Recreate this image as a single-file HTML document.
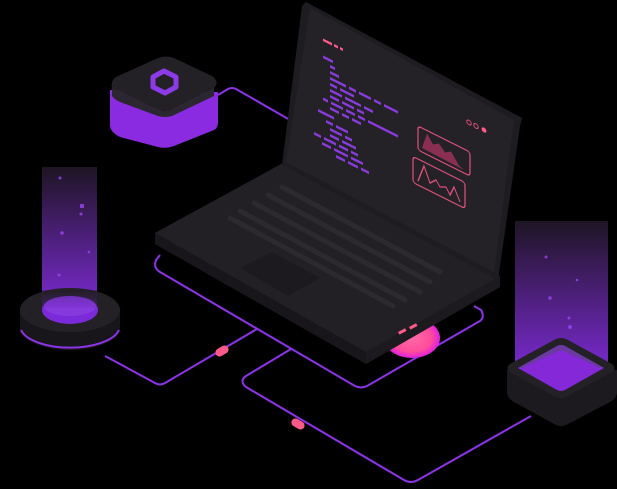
<!DOCTYPE html>
<html><head><style>
html,body{margin:0;padding:0;background:#000;width:617px;height:489px;overflow:hidden}
svg{display:block}
</style></head><body>
<svg width="617" height="489" viewBox="0 0 617 489" xmlns="http://www.w3.org/2000/svg">
<defs>
<linearGradient id="beam" x1="0" y1="0" x2="0" y2="1">
<stop offset="0" stop-color="#1e1524"/>
<stop offset="1" stop-color="#7a2ad0"/>
</linearGradient>
<radialGradient id="glow" cx="0.5" cy="0.5" r="0.5">
<stop offset="0" stop-color="#ff6aa8"/>
<stop offset="0.7" stop-color="#ff4c9a"/>
<stop offset="1" stop-color="#e020e0"/>
</radialGradient>
</defs>
<rect width="617" height="489" fill="#000"/>

<!-- wires -->
<g fill="none" stroke="#8d33e8" stroke-width="2" stroke-linejoin="round">
<path d="M218 95 L228 89 Q232 87 236 89 L290 120"/>
<path d="M160 255 L156 260 Q153 268 160 272 L355 386 Q361 389 367 386 L480 321 Q485 317 481 310 L474 306"/>
<path d="M257 329 L165 383 Q160 386 155 383 L105 356"/>
<path d="M291 349 L246 376 Q239 381 246 387 L404 480 Q411 484 418 480 L531 416"/>
</g>
<rect x="215" y="347" width="14" height="8" rx="4" fill="#ff5a8a" transform="rotate(-30 222 351)"/>
<rect x="291" y="420" width="14" height="8" rx="4" fill="#ff5a8a" transform="rotate(30 298 424)"/>

<!-- glow under laptop -->
<ellipse cx="412" cy="338" rx="28" ry="20" fill="url(#glow)"/>

<!-- laptop base -->
<polygon points="155,233 283,163 500,276 500,287 366,364 155,244" fill="#1c1a1e"/>
<polygon points="155,233 283,163 500,276 366,352" fill="#222025"/>
<polygon points="155,233 366,352 366,364 155,244" fill="#18161a"/>
<!-- keyboard -->
<g stroke="#2c292f" stroke-width="5" stroke-linecap="round">
<line x1="282" y1="187" x2="440" y2="272"/>
<line x1="268" y1="195" x2="430" y2="282"/>
<line x1="254" y1="203" x2="420" y2="292"/>
<line x1="240" y1="211" x2="405" y2="300"/>
<line x1="230" y1="218" x2="393" y2="306"/>
</g>
<polygon points="240,268 272,252 320,278 288,296" fill="#1c1a1e"/>
<g fill="#ff5a8a"><rect x="398" y="330" width="8" height="3" transform="rotate(-28 402 331)"/><rect x="409" y="325" width="8" height="3" transform="rotate(-28 413 326)"/></g>

<!-- laptop lid -->
<polygon points="306,2 522,118 520,126 498,280 282,165 302,6" fill="#1e1c20"/>
<polygon points="310,8 514,120 494,272 286,162" fill="#252227"/>

<!-- screen content in skewed space -->
<g transform="matrix(1,0.5,0,1,0,0)">
<g fill="#ff5a8a"><rect x="323" y="-123" width="9" height="2.5"/><rect x="334" y="-123" width="4" height="2.5"/><rect x="340" y="-123" width="3" height="2.5"/></g>
<g fill="#8a3be0">
<rect x="323" y="-106" width="10" height="2.6"/>
<rect x="330" y="-100" width="5" height="2.6"/>
<rect x="330" y="-94" width="9" height="2.6"/>
<rect x="330" y="-88" width="16" height="2.6"/><rect x="349" y="-88" width="7" height="2.6"/><rect x="359" y="-88" width="12" height="2.6"/><rect x="374" y="-88" width="7" height="2.6"/><rect x="384" y="-88" width="14" height="2.6"/>
<rect x="330" y="-82" width="7" height="2.6"/><rect x="340" y="-82" width="14" height="2.6"/>
<rect x="330" y="-76" width="12" height="2.6"/><rect x="345" y="-76" width="16" height="2.6"/><rect x="364" y="-76" width="9" height="2.6"/>
<rect x="330" y="-70" width="9" height="2.6"/><rect x="342" y="-70" width="12" height="2.6"/><rect x="357" y="-70" width="7" height="2.6"/>
<rect x="323" y="-64" width="5" height="2.6"/><rect x="331" y="-64" width="12" height="2.6"/><rect x="346" y="-64" width="9" height="2.6"/><rect x="358" y="-64" width="7" height="2.6"/><rect x="368" y="-64" width="30" height="2.6"/>
<rect x="330" y="-58" width="9" height="2.6"/><rect x="342" y="-58" width="7" height="2.6"/><rect x="352" y="-58" width="9" height="2.6"/>
<rect x="318" y="-50" width="16" height="2.6"/>
<rect x="326" y="-43" width="7" height="2.6"/><rect x="336" y="-43" width="12" height="2.6"/>
<rect x="330" y="-37" width="12" height="2.6"/><rect x="345" y="-37" width="7" height="2.6"/>
<rect x="330" y="-31" width="9" height="2.6"/><rect x="342" y="-31" width="14" height="2.6"/>
<rect x="314" y="-25" width="7" height="2.6"/><rect x="324" y="-25" width="12" height="2.6"/><rect x="339" y="-25" width="9" height="2.6"/><rect x="351" y="-25" width="7" height="2.6"/>
<rect x="322" y="-19" width="9" height="2.6"/><rect x="334" y="-19" width="14" height="2.6"/><rect x="351" y="-19" width="12" height="2.6"/>
<rect x="336" y="-13" width="9" height="2.6"/><rect x="348" y="-13" width="10" height="2.6"/><rect x="361" y="-13" width="8" height="2.6"/>
</g>
<g fill="none" stroke="#e0507a" stroke-width="1.2">
<rect x="418" y="-83" width="52" height="24" rx="3"/>
<rect x="413" y="-50" width="52" height="26" rx="3"/>
<path d="M418 -28 L424 -46 L430 -32 L436 -38 L440 -33 L446 -36 L450 -30 L454 -40 L460 -28"/>
</g>
<path d="M422 -63 L427 -80 L433 -72 L439 -76 L445 -70 L451 -74 L459 -64 L464 -62 Z" fill="#8a2f52"/>
<g fill="none" stroke="#e0507a" stroke-width="1"><circle cx="469" cy="-112" r="2.2"/><circle cx="476" cy="-112" r="2.2"/></g>
<circle cx="484" cy="-112" r="2.4" fill="#ff5a8a"/>
</g>

<!-- top-left box -->
<path d="M110 90 L110 125 Q110 132 120 137 L158 147 Q166 149 174 146 L214 130 Q218 128 218 122 L218 92 Z" fill="#8a2be2"/>
<path d="M112 88 Q110 80 118 76 L158 58 Q166 55 174 58 L212 76 Q220 82 214 88 L172 110 Q165 114 158 110 Z" fill="#242126"/>
<path d="M112 88 L112 96 Q115 100 120 102 L158 116 Q165 118 172 116 L214 96 L214 88 L172 110 Q165 114 158 110 Z" fill="#2b2730"/>
<path d="M164 71 L176 77 L176 87 L165 93 L153 87 L153 77 Z" fill="none" stroke="#8d3be8" stroke-width="5" stroke-linejoin="round"/>

<!-- left cylinder -->
<rect x="42" y="167" width="55" height="140" fill="url(#beam)"/>
<g fill="#9b45f0" opacity="0.8"><circle cx="60" cy="178" r="1.5"/><rect x="80" y="204" width="4" height="4"/><circle cx="81" cy="214" r="1.5"/><circle cx="62" cy="233" r="1.8"/><circle cx="89" cy="252" r="1.3"/><circle cx="59" cy="275" r="1.5"/></g>
<path d="M20 310 L20 328 A50 22 0 0 0 120 328 L120 310 Z" fill="#18161a"/>
<ellipse cx="70" cy="310" rx="50" ry="22" fill="#242126"/>
<path d="M21 330 A50 22 0 0 0 119 330" fill="none" stroke="#8d33e8" stroke-width="2"/>
<ellipse cx="70" cy="310" rx="28" ry="14" fill="#7a2ad8"/>
<ellipse cx="70" cy="306" rx="26" ry="10" fill="#8d45e0" opacity="0.6"/>
<rect x="42" y="290" width="55" height="18" fill="url(#beam)" opacity="0.3"/>

<!-- right block -->
<rect x="515" y="221" width="93" height="150" fill="url(#beam)"/>
<g fill="#9b45f0" opacity="0.8"><circle cx="546" cy="257" r="1.5"/><circle cx="577" cy="280" r="1.3"/><circle cx="550" cy="298" r="1.8"/><circle cx="569" cy="318" r="1.5"/><circle cx="570" cy="327" r="2"/></g>
<path d="M507 370 L507 392 Q507 398 514 402 L554 424 Q561 428 568 424 L610 402 Q617 398 617 392 L617 370 Z" fill="#1c1a1e"/>
<path d="M510 364 L554 340 Q561 336 568 340 L612 364 Q617 368 612 372 L568 396 Q561 400 554 396 L510 372 Q505 368 510 364 Z" fill="#242126"/>
<path d="M518 368 L557 346 Q561 344 565 346 L604 368 L565 390 Q561 392 557 390 Z" fill="#8428d8"/>
<path d="M518 368 L557 346 Q561 344 565 346 L604 368 L600 368 L561 350 L522 368 Z" fill="#6a3aa0"/>
</svg>
</body></html>
